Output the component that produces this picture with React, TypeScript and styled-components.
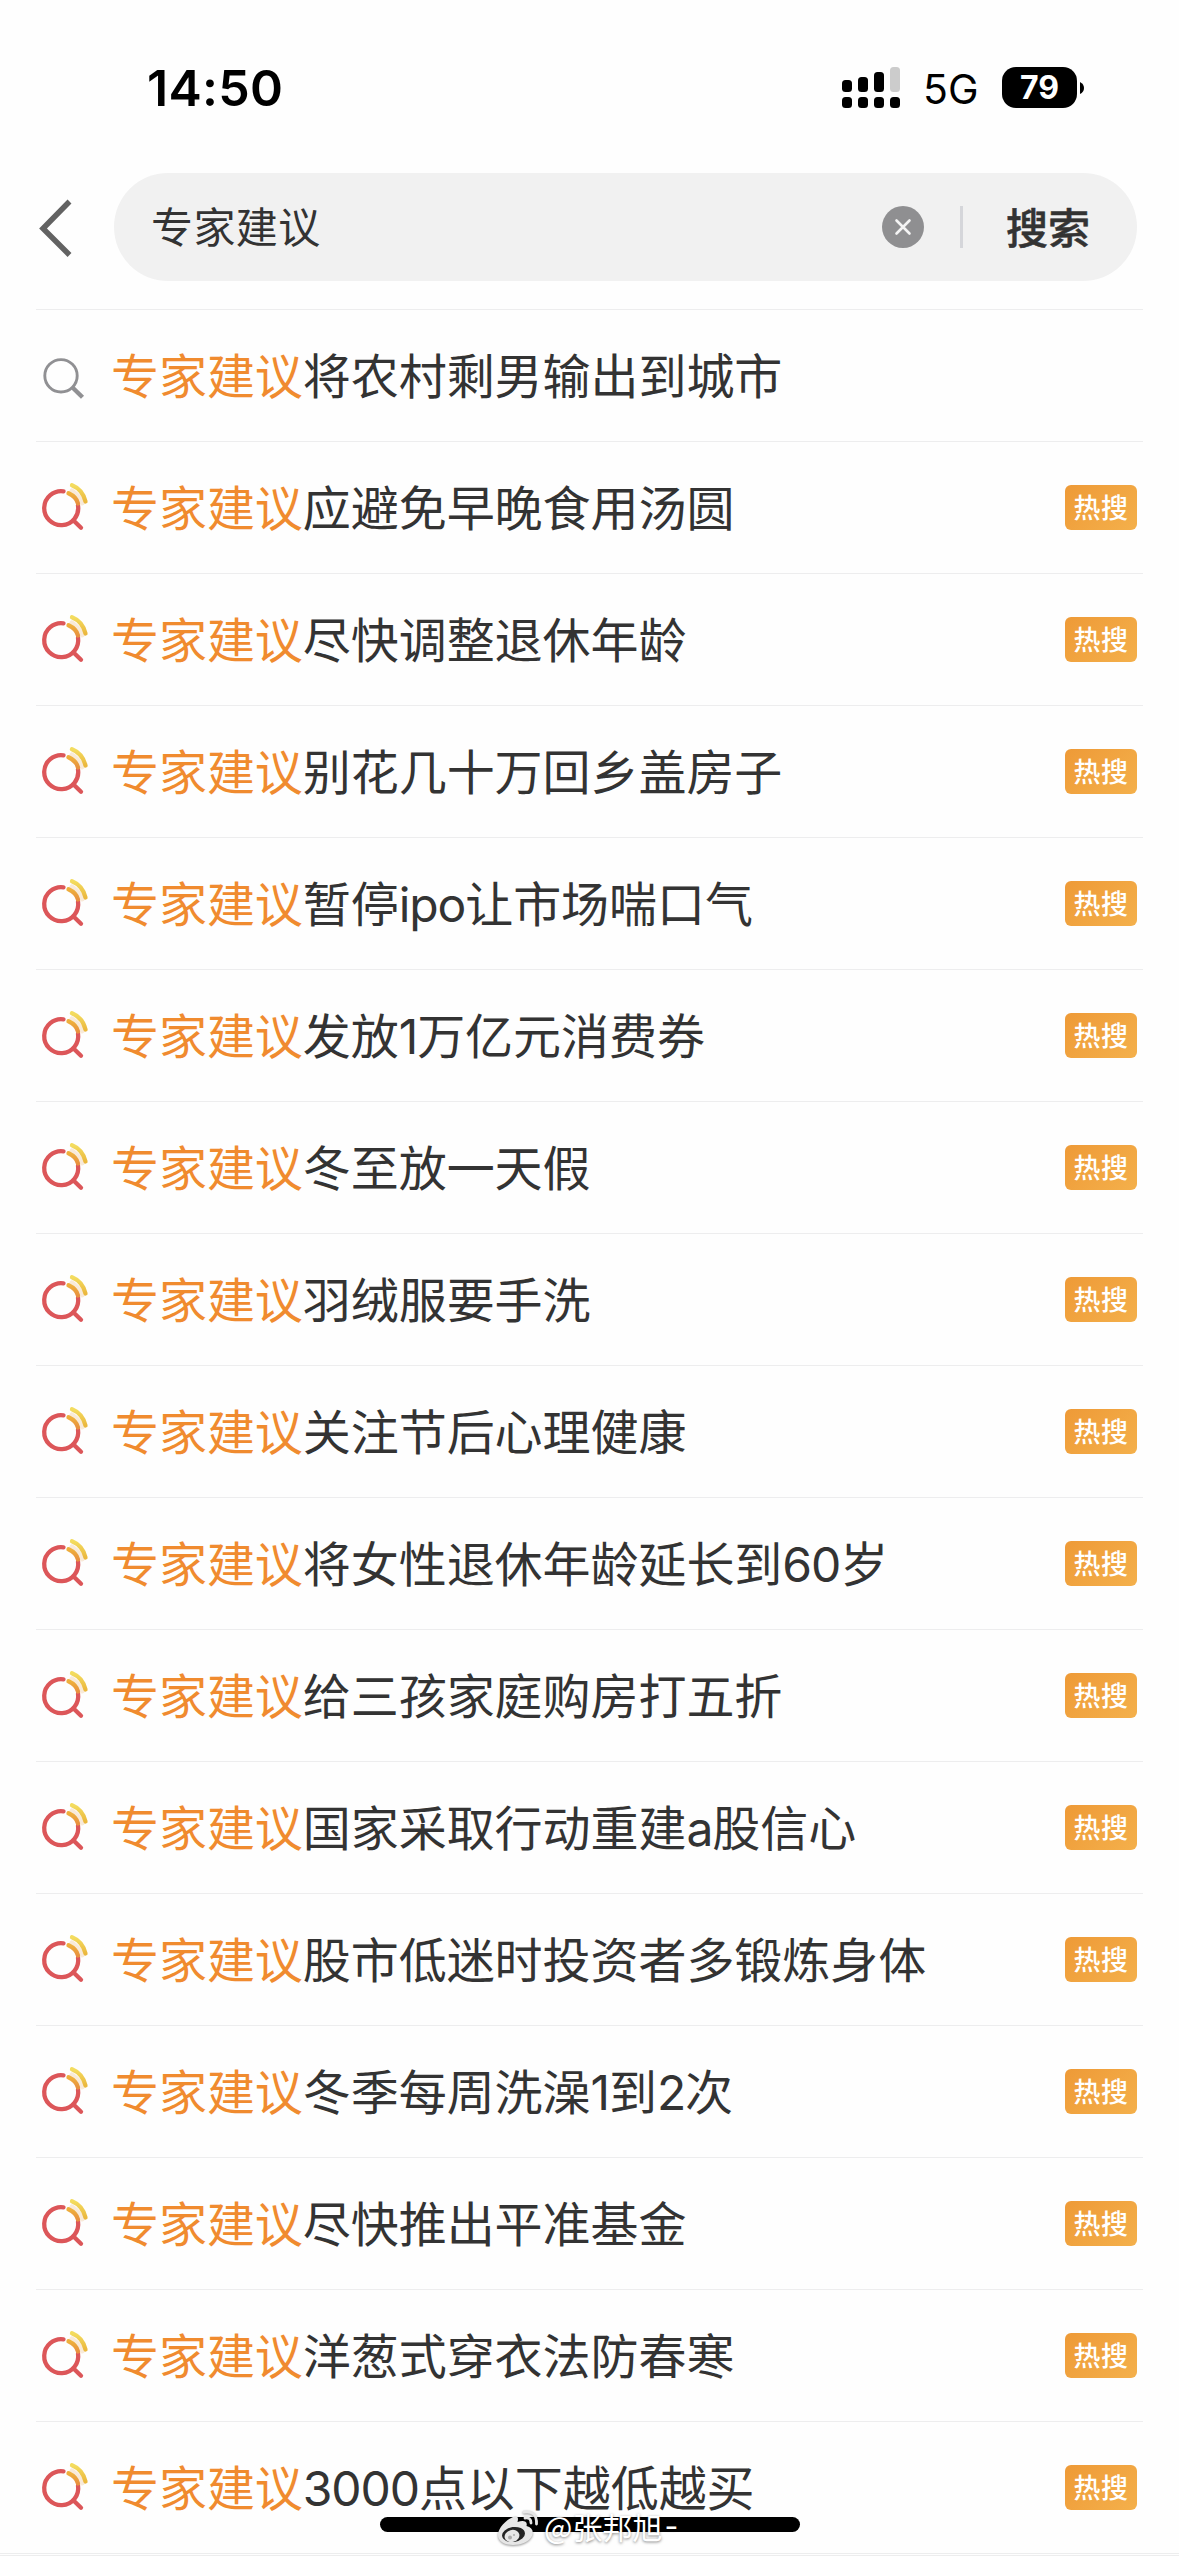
import React from "react";
import styled, { createGlobalStyle } from "styled-components";

const Global = createGlobalStyle`
  * { box-sizing: border-box; }
  html, body { margin: 0; padding: 0; background: #fefefe; }
  body { overflow: hidden; }
`;

const cjk = `"Noto Sans CJK SC", sans-serif`;

const Screen = styled.main`
  position: relative;
  width: 1179px;
  height: 2556px;
  overflow: hidden;
  background: #fefefe;
  color: #333;
  font-family: Inter, ${cjk};
  display: flex;
  flex-direction: column;
`;

const StatusBar = styled.header`
  height: 173px;
  flex: none;
  display: flex;
  align-items: flex-start;
  justify-content: space-between;
  padding: 67px 95px 0 147px;
  color: #000;
`;

const Clock = styled.div`
  font: 600 50px/42px Inter, sans-serif;
  letter-spacing: 0.3px;
`;

const StatusIcons = styled.div`
  display: flex;
  height: 41px;
  align-items: center;
`;

const Network = styled.span`
  font: 400 41px/41px Inter, sans-serif;
  width: 54px;
  margin: 4px 25px 0 23px;
  white-space: nowrap;
`;

const Battery = styled.div`
  width: 75px;
  height: 41px;
  border-radius: 14px;
  background: #000;
  color: #fff;
  text-align: center;
  font: 700 32px/42px Inter, sans-serif;
`;

const SearchBar = styled.section`
  height: 136px;
  flex: none;
  display: flex;
  align-items: flex-start;
  padding-left: 38px;
`;

const BackIcon = styled.svg`
  width: 36px;
  height: 62px;
  margin: 24px 40px 0 0;
`;

const SearchField = styled.div`
  width: 1023px;
  height: 108px;
  border-radius: 54px;
  background: #f1f1f1;
  display: flex;
  align-items: center;
  padding: 0 47px 0 37px;
`;

const Query = styled.span`
  flex: 1;
  font: 400 42px/62px ${cjk};
  letter-spacing: 0.4px;
  padding-bottom: 4px;
`;

const ClearIcon = styled.svg`
  width: 42px;
  height: 42px;
`;

const Separator = styled.span`
  width: 3px;
  height: 42px;
  margin: 0 43px 0 36px;
  background: #d5d6da;
`;

const SearchButton = styled.span`
  font: 500 42px/62px ${cjk};
  width: 84px;
  white-space: nowrap;
  padding-bottom: 3px;
  -webkit-text-stroke: 0.5px #333;
`;

const List = styled.ul`
  list-style: none;
  margin: 0 0 0 36px;
  padding: 0;
  width: 1107px;
`;

const Row = styled.li`
  height: 132px;
  border-top: 1px solid #ededee;
  display: flex;
  align-items: center;
  padding: 0 6px 0 3px;
`;

const RowIcon = styled.svg`
  width: 54px;
  height: 54px;
  flex: none;
  margin-right: 18px;
`;

const Title = styled.span`
  flex: 1;
  white-space: nowrap;
  font: 400 48px/70px Inter, ${cjk};
  letter-spacing: -0.05px;
  padding-top: 2px;
`;

const Keyword = styled.span`
  color: #f08b2f;
`;

const Latin = styled.span`
  font-weight: 400;
  letter-spacing: -1.1px;
`;

const HotTag = styled.span`
  width: 72px;
  height: 45px;
  border-radius: 6px;
  background: linear-gradient(135deg, #ee9a37, #f4b04b);
  color: #fff;
  text-align: center;
  font: 500 27px/44px ${cjk};
  letter-spacing: 0.5px;
`;

const EndLine = styled.div`
  height: 3px;
  border-top: 1px solid #ededee;
  border-bottom: 1px solid #ededee;
`;

const HomeIndicator = styled.div`
  position: absolute;
  left: 380px;
  top: 2517px;
  width: 420px;
  height: 15px;
  border-radius: 8px;
  background: #000;
`;

const Watermark = styled.div`
  position: absolute;
  left: 497px;
  top: 2508px;
  height: 36px;
  display: flex;
  align-items: flex-start;
  color: #fff;
  font: 400 30px/36px ${cjk};
  white-space: nowrap;
  text-shadow: 0 1px 3px rgba(0, 0, 0, 0.5);
`;

const Dash = styled.span`
  font-family: Inter, sans-serif;
  margin-left: 2px;
`;

const WeiboIcon = styled.svg`
  width: 42px;
  height: 38px;
  margin: 1px 5px 0 0;
  filter: drop-shadow(0 1px 1px rgba(0, 0, 0, 0.4));
`;

const topics = [
  "将农村剩男输出到城市",
  "应避免早晚食用汤圆",
  "尽快调整退休年龄",
  "别花几十万回乡盖房子",
  "暂停ipo让市场喘口气",
  "发放1万亿元消费券",
  "冬至放一天假",
  "羽绒服要手洗",
  "关注节后心理健康",
  "将女性退休年龄延长到60岁",
  "给三孩家庭购房打五折",
  "国家采取行动重建a股信心",
  "股市低迷时投资者多锻炼身体",
  "冬季每周洗澡1到2次",
  "尽快推出平准基金",
  "洋葱式穿衣法防春寒",
  "3000点以下越低越买",
];

const PlainSearch = () => (
  <RowIcon viewBox="0 0 54 54" fill="none" stroke="#909093">
    <circle cx="22" cy="26.800" r="16.200" strokeWidth="2.900" />
    <path d="M33 38 43.500 48.300" strokeWidth="4.400" />
  </RowIcon>
);

const HotSearch = () => (
  <RowIcon viewBox="0 0 54 54" fill="none" strokeLinecap="round" strokeWidth="4.300">
    <defs>
      <linearGradient id="inner" x1="0" y1="0" x2="0" y2="1">
        <stop offset="0" stopColor="#eeb13c" />
        <stop offset="1" stopColor="#e8913f" />
      </linearGradient>
      <linearGradient id="outer" x1="0" y1="0" x2="0" y2="1">
        <stop offset="0" stopColor="#f3dc5f" />
        <stop offset="1" stopColor="#ebb83e" />
      </linearGradient>
    </defs>
    <path d="M33 10Q40.500 15 43 22" stroke="#f8ead9" strokeWidth="5" />
    <path d="M24.500 10.300A17 17 0 1 0 39 24.500" stroke="#dc5659" />
    <path d="M34.500 39.500 42 46.800" stroke="#dc5659" />
    <path d="M29.500 12.300Q37.500 16 39 22.500" stroke="url(#inner)" />
    <path d="M33 4.300Q43.500 8.500 46.500 20.500" stroke="url(#outer)" />
  </RowIcon>
);

const renderTopic = (topic: string) =>
  topic
    .split(/([a-z0-9]+)/)
    .map((part, i) => (i % 2 ? <Latin key={i}>{part}</Latin> : part));

export default function App() {
  return (
    <Screen>
      <Global />
      <StatusBar>
        <Clock>14:50</Clock>
        <StatusIcons>
          <svg width="58" height="41" viewBox="0 0 58 41">
            <rect x="0" y="13" width="10" height="12" rx="3.5" />
            <rect x="16" y="10" width="10" height="15" rx="3.5" />
            <rect x="32" y="5" width="10" height="20" rx="3.5" />
            <rect x="48" y="0" width="10" height="25" rx="3.5" fill="#ccc" />
            {[0, 16, 32, 48].map((x) => (
              <rect key={x} x={x} y="30" width="10" height="11" rx="3.5" />
            ))}
          </svg>
          <Network>5G</Network>
          <Battery>79</Battery>
          <svg width="7" height="14" viewBox="0 0 7 14">
            <path d="M3 1Q7 3 7 7T3 13Z" />
          </svg>
        </StatusIcons>
      </StatusBar>
      <SearchBar>
        <BackIcon viewBox="0 0 36 62" fill="none" stroke="#626262" strokeWidth="5.5">
          <path d="M31.500 4.500 5 31.500 31.500 58" />
        </BackIcon>
        <SearchField>
          <Query>专家建议</Query>
          <ClearIcon viewBox="0 0 42 42">
            <circle cx="21" cy="21" r="21" fill="#8f8f91" />
            <path
              d="M14.500 14.500 27.500 27.500M27.500 14.500 14.500 27.500"
              stroke="#f4f4f4"
              strokeWidth="2.6"
              strokeLinecap="round"
            />
          </ClearIcon>
          <Separator />
          <SearchButton>搜索</SearchButton>
        </SearchField>
      </SearchBar>
      <List>
        {topics.map((topic, i) => (
          <Row key={topic}>
            {i === 0 ? <PlainSearch /> : <HotSearch />}
            <Title>
              <Keyword>专家建议</Keyword>
              {renderTopic(topic)}
            </Title>
            {i > 0 && <HotTag>热搜</HotTag>}
          </Row>
        ))}
      </List>
      <EndLine />
      <HomeIndicator />
      <Watermark>
        <WeiboIcon viewBox="0 0 42 38" fill="none">
          <path
            d="M16 8C20 6 22 8 20.500 13 26 11 31 12 29.500 17 35 18.500 37 22 35 27 32 33 24 36 16 36 7 36 1 32 1 26 1 19 9 11 16 8Z"
            fill="#e6e6e6"
          />
          <ellipse cx="16.500" cy="25.500" rx="11.500" ry="7.500" fill="#222" transform="rotate(-8 16.500 25.500)" />
          <ellipse cx="15" cy="27" rx="7.500" ry="6" fill="#e6e6e6" transform="rotate(-15 15 27)" />
          <circle cx="13" cy="28.500" r="2" fill="#aaa" />
          <circle cx="17" cy="26" r="1" fill="#aaa" />
          <path d="M27 3Q40 1 39.500 15M28 9Q34 8 34 14" stroke="#e6e6e6" strokeWidth="2.800" strokeLinecap="round" />
        </WeiboIcon>
        @张邦旭<Dash>-</Dash>
      </Watermark>
    </Screen>
  );
}
